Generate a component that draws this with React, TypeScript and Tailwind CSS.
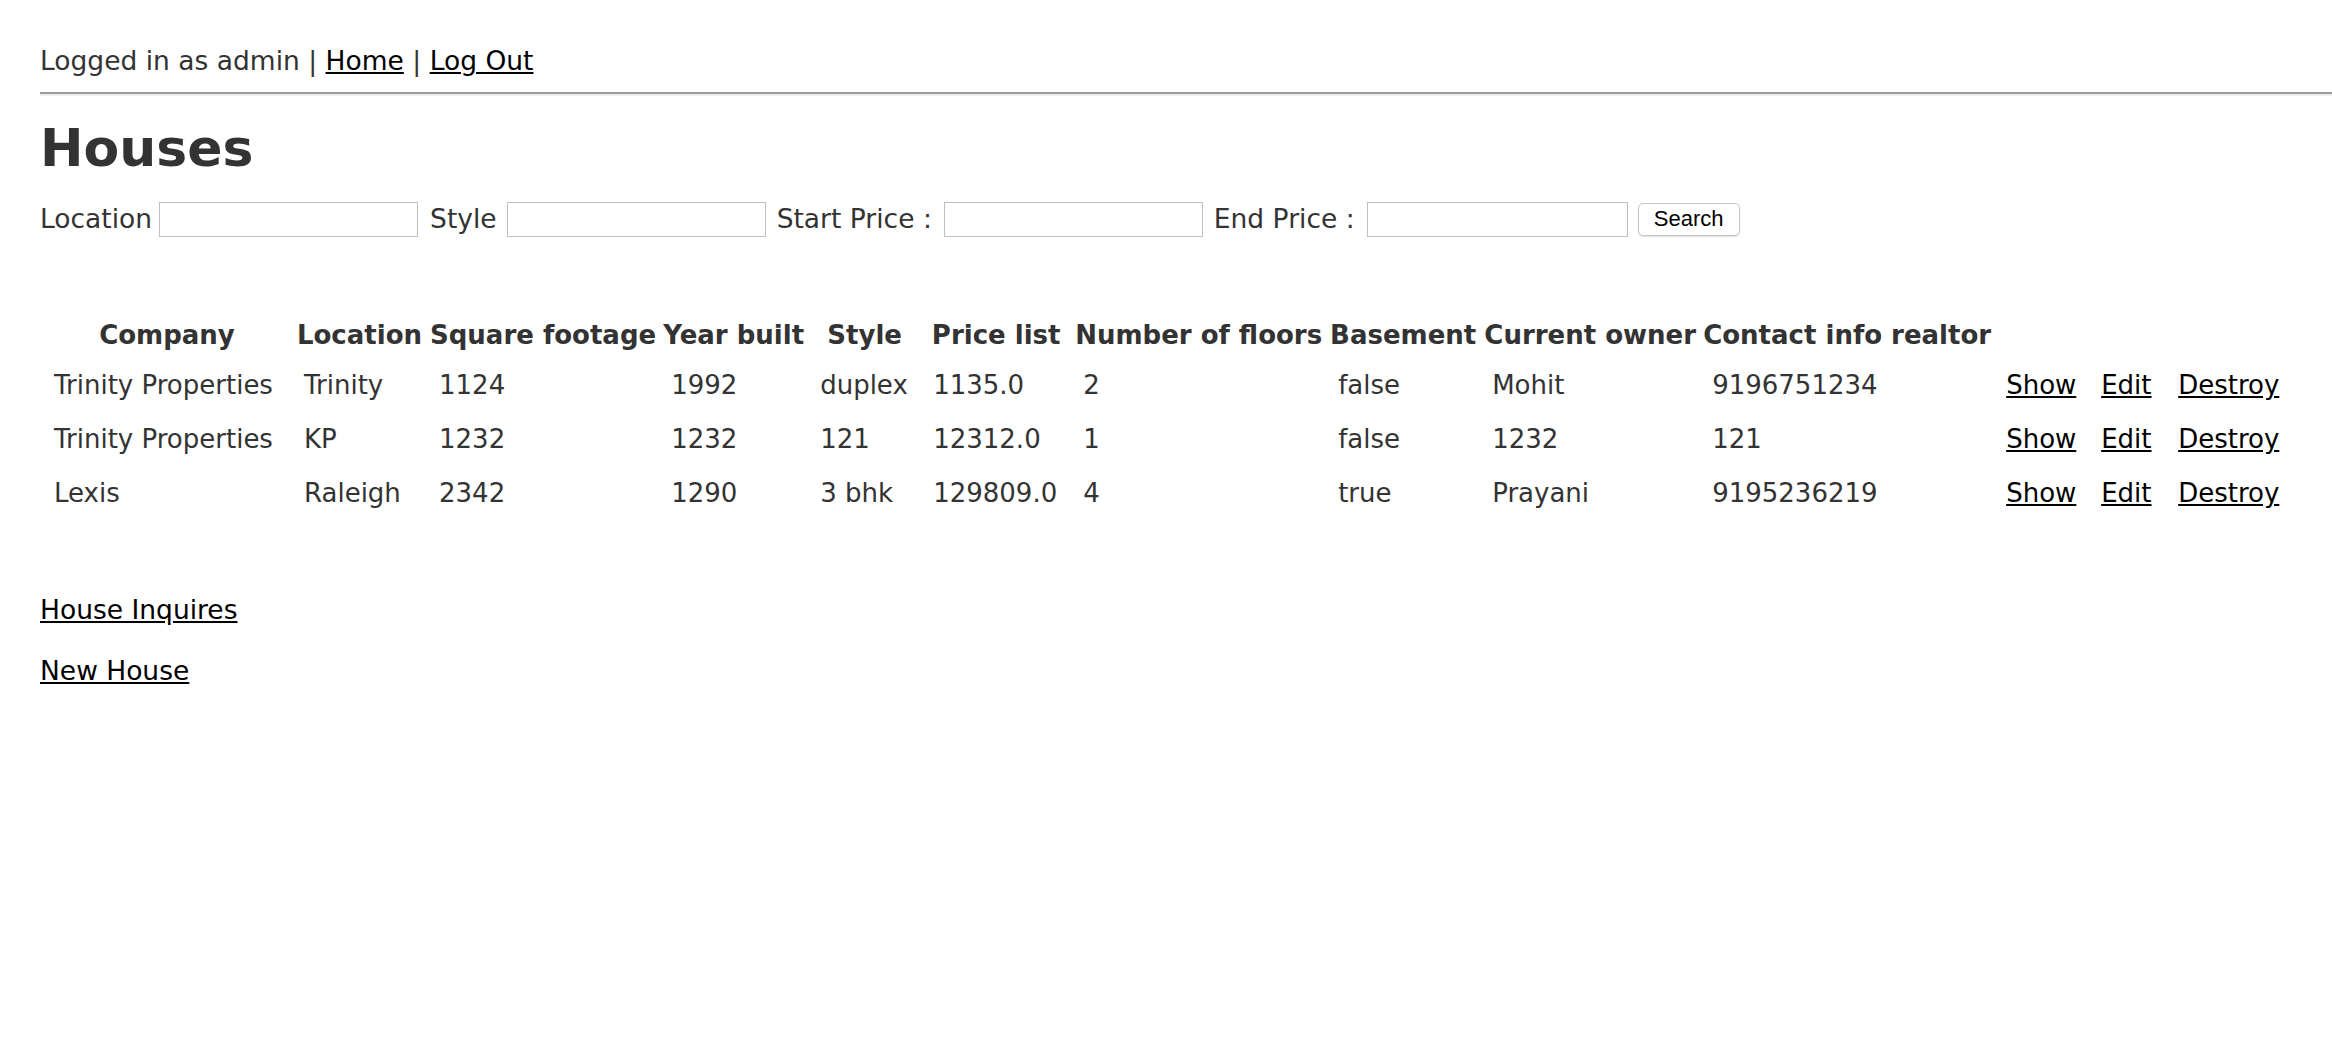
import React from 'react';

type House = {
  company: string;
  location: string;
  sqft: string;
  year: string;
  style: string;
  price: string;
  floors: string;
  basement: string;
  owner: string;
  contact: string;
};

const HOUSES: House[] = [
  { company: 'Trinity Properties', location: 'Trinity', sqft: '1124', year: '1992', style: 'duplex', price: '1135.0', floors: '2', basement: 'false', owner: 'Mohit', contact: '9196751234' },
  { company: 'Trinity Properties', location: 'KP', sqft: '1232', year: '1232', style: '121', price: '12312.0', floors: '1', basement: 'false', owner: '1232', contact: '121' },
  { company: 'Lexis', location: 'Raleigh', sqft: '2342', year: '1290', style: '3 bhk', price: '129809.0', floors: '4', basement: 'true', owner: 'Prayani', contact: '9195236219' },
];

const HEADERS = [
  'Company',
  'Location',
  'Square footage',
  'Year built',
  'Style',
  'Price list',
  'Number of floors',
  'Basement',
  'Current owner',
  'Contact info realtor',
];

const App: React.FC = () => {
  return (
    <div className="min-h-screen bg-white pl-[40px] pt-[43px] text-[26.5px] leading-[36px] text-[#333] font-['DejaVu_Sans',Verdana,sans-serif]">
      {/* Session bar */}
      <p>
        Logged in as admin | <a href="#" className="text-black underline">Home</a> |{' '}
        <a href="#" className="text-black underline">Log Out</a>
      </p>
      <hr className="mt-[13px] border-t-2 border-b-2 border-t-[#999] border-b-[#eee]" />

      <h1 className="mt-[22px] text-[52px] leading-[60px] font-bold">Houses</h1>

      {/* Search form */}
      <form className="mt-[23px] flex items-center" onSubmit={e => e.preventDefault()}>
        <label>Location</label>
        <input type="text" className="ml-[7px] h-[35px] w-[259px] border border-[#bfbfbf] bg-white" />
        <label className="ml-[12px]">Style</label>
        <input type="text" className="ml-[10px] h-[35px] w-[259px] border border-[#bfbfbf] bg-white" />
        <label className="ml-[11px]">Start Price :</label>
        <input type="text" className="ml-[12px] h-[35px] w-[259px] border border-[#bfbfbf] bg-white" />
        <label className="ml-[11px]">End Price :</label>
        <input type="text" className="ml-[12px] h-[35px] w-[261px] border border-[#bfbfbf] bg-white" />
        <button
          type="submit"
          className="ml-[10px] h-[33px] w-[102px] rounded-[5px] border border-[#c6c6c6] bg-white text-[22px] leading-none text-black shadow-[0_1px_1px_rgba(0,0,0,0.12)] font-['Liberation_Sans',Arial,sans-serif]"
        >
          Search
        </button>
      </form>

      {/* Listing */}
      <table className="mt-[76px] border-separate border-spacing-[4px] text-[26px]">
        <colgroup>
          <col className="w-[246px]" />
          <col className="w-[131px]" />
          <col className="w-[228px]" />
          <col className="w-[145px]" />
          <col className="w-[109px]" />
          <col className="w-[146px]" />
          <col className="w-[251px]" />
          <col className="w-[150px]" />
          <col className="w-[216px]" />
          <col className="w-[290px]" />
          <col className="w-[91px]" />
          <col className="w-[73px]" />
          <col className="w-[120px]" />
        </colgroup>
        <thead>
          <tr>
            {HEADERS.map(h => (
              <th key={h} className="px-[1px] pb-[10px] text-center font-bold whitespace-nowrap">{h}</th>
            ))}
            <th colSpan={3}></th>
          </tr>
        </thead>
        <tbody>
          {HOUSES.map((h, i) => (
            <tr key={i}>
              <td className="px-[10px] pb-[14px] whitespace-nowrap">{h.company}</td>
              <td className="px-[10px] pb-[14px] whitespace-nowrap">{h.location}</td>
              <td className="px-[10px] pb-[14px]">{h.sqft}</td>
              <td className="px-[10px] pb-[14px]">{h.year}</td>
              <td className="px-[10px] pb-[14px] whitespace-nowrap">{h.style}</td>
              <td className="px-[10px] pb-[14px]">{h.price}</td>
              <td className="px-[10px] pb-[14px]">{h.floors}</td>
              <td className="px-[10px] pb-[14px]">{h.basement}</td>
              <td className="px-[10px] pb-[14px]">{h.owner}</td>
              <td className="px-[10px] pb-[14px]">{h.contact}</td>
              <td className="px-[10px] pb-[14px]"><a href="#" className="text-black underline">Show</a></td>
              <td className="px-[10px] pb-[14px]"><a href="#" className="text-black underline">Edit</a></td>
              <td className="px-[10px] pb-[14px]"><a href="#" className="text-black underline">Destroy</a></td>
            </tr>
          ))}
        </tbody>
      </table>

      <div className="mt-[63px] flex flex-col items-start gap-[25px]">
        <a href="#" className="text-black underline">House Inquires</a>
        <a href="#" className="text-black underline">New House</a>
      </div>
    </div>
  );
};

export default App;
